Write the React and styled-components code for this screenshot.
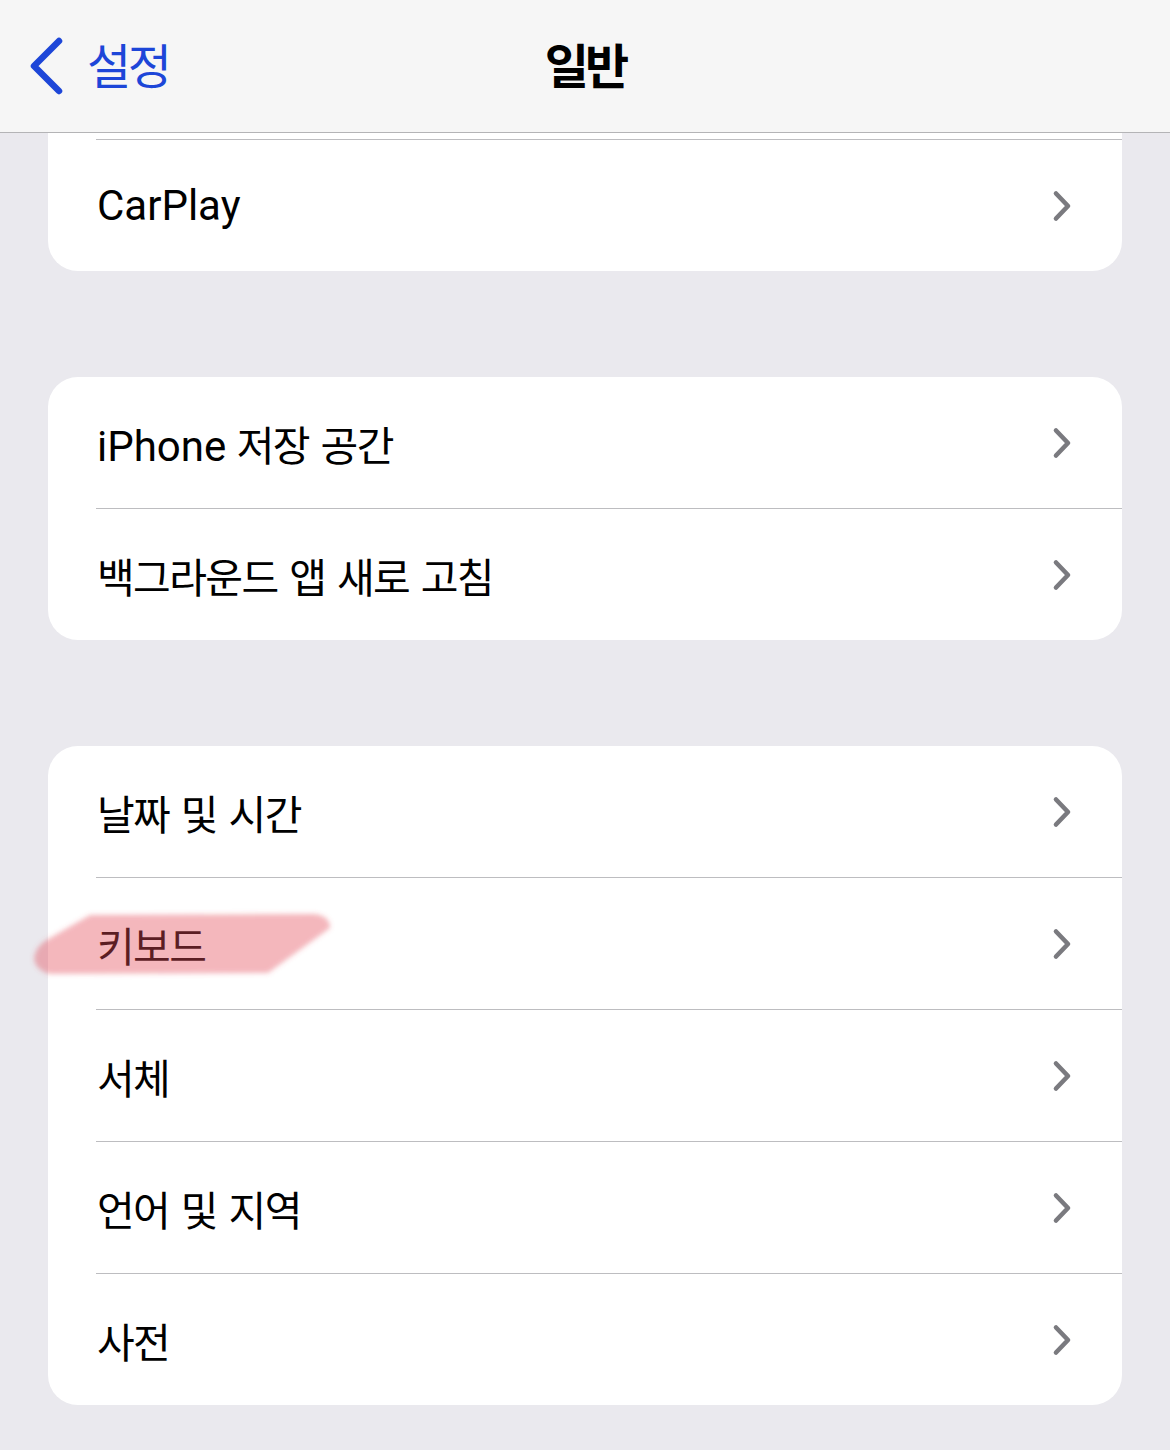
import styled, { createGlobalStyle } from "styled-components";

const GlobalStyle = createGlobalStyle`
  body {
    margin: 0;
    background: #eae9ee;
    font-family: "Roboto", "Noto Sans CJK KR", sans-serif;
    -webkit-font-smoothing: antialiased;
  }
`;

const Page = styled.div`
  width: 1170px;
  min-height: 1450px;
  background: #eae9ee;
`;

const NavBar = styled.header`
  height: 132px;
  background: #f6f6f6;
  border-bottom: 1px solid #b4b4b6;
  display: grid;
  grid-template-columns: 1fr auto 1fr;
  align-items: center;
`;

const BackButton = styled.div`
  display: flex;
  align-items: center;
  gap: 23px;
  padding-left: 28px;
  color: #1d46d8;
`;

const BackLabel = styled.span`
  font-family: "Noto Sans CJK KR", sans-serif;
  font-size: 48px;
  letter-spacing: -3.5px;
  line-height: 1;
  padding-bottom: 6px;
`;

const Title = styled.h1`
  margin: 0;
  padding-bottom: 6px;
  font-family: "Noto Sans CJK KR", sans-serif;
  font-size: 48px;
  font-weight: 700;
  letter-spacing: -4px;
  color: #000;
  line-height: 1;
`;

const Content = styled.main`
  display: flex;
  flex-direction: column;
  gap: 106px;
  padding: 0 48px;
`;

const Group = styled.section`
  background: #fff;
  border-radius: ${(p) => (p.$cut ? "0 0 30px 30px" : "30px")};
`;

const Peek = styled.div`
  height: 6px;
`;

const Divider = styled.div`
  height: 1px;
  margin-left: 48px;
  background: #bdbdc0;
`;

const Row = styled.div`
  position: relative;
  height: 131px;
  display: flex;
  align-items: center;
  justify-content: space-between;
  padding: 0 50px 0 49px;
  font-size: 42px;
  color: #000;
`;

const Label = styled.span`
  white-space: pre;
`;

const Ko = styled.span`
  font-family: "Noto Sans CJK KR", sans-serif;
  font-size: 41px;
  letter-spacing: -1.6px;
  word-spacing: 4px;
`;

const Highlight = styled.svg`
  position: absolute;
  left: -28px;
  top: 22px;
  pointer-events: none;
`;

function Text({ children }) {
  const parts = children.split(/([가-힣]+(?:\s+[가-힣]+)*)/g).filter(Boolean);
  return (
    <Label>
      {parts.map((p, i) => (/[가-힣]/.test(p) ? <Ko key={i}>{p}</Ko> : <span key={i}>{p}</span>))}
    </Label>
  );
}

function Chevron() {
  return (
    <svg width="20" height="32" viewBox="0 0 20 32">
      <path d="M4 3.5 L16 16 L4 28.5" fill="none" stroke="#7a7a7f" strokeWidth="4.6" strokeLinecap="round" strokeLinejoin="round" />
    </svg>
  );
}

function Mark() {
  return (
    <Highlight width="330" height="95" viewBox="0 0 330 95">
      <defs>
        <filter id="soft" x="-10%" y="-20%" width="120%" height="140%">
          <feGaussianBlur stdDeviation="2.6" />
        </filter>
      </defs>
      <path
        d="M70 15 L295 14 Q310 16 310 28 L248 73 L30 74 Q15 70 14 58 Q16 45 30 38 Z"
        fill="rgba(228,74,88,0.4)"
        filter="url(#soft)"
      />
    </Highlight>
  );
}

function Item({ label, marked }) {
  return (
    <Row>
      <Text>{label}</Text>
      <Chevron />
      {marked && <Mark />}
    </Row>
  );
}

function List({ items, cut }) {
  return (
    <Group $cut={cut}>
      {cut && <Peek />}
      {items.map((it, i) => (
        <div key={it.label}>
          {(i > 0 || cut) && <Divider />}
          <Item {...it} />
        </div>
      ))}
    </Group>
  );
}

const groups = [
  [{ label: "CarPlay" }],
  [{ label: "iPhone 저장 공간" }, { label: "백그라운드 앱 새로 고침" }],
  [
    { label: "날짜 및 시간" },
    { label: "키보드", marked: true },
    { label: "서체" },
    { label: "언어 및 지역" },
    { label: "사전" },
  ],
];

export default function App() {
  return (
    <Page>
      <GlobalStyle />
      <NavBar>
        <BackButton>
          <svg width="36" height="58" viewBox="0 0 36 58">
            <path d="M31 4 L6 29 L31 54" fill="none" stroke="#1d46d8" strokeWidth="6.5" strokeLinecap="round" strokeLinejoin="round" />
          </svg>
          <BackLabel>설정</BackLabel>
        </BackButton>
        <Title>일반</Title>
        <div />
      </NavBar>
      <Content>
        {groups.map((g, i) => (
          <List key={i} items={g} cut={i === 0} />
        ))}
      </Content>
    </Page>
  );
}
